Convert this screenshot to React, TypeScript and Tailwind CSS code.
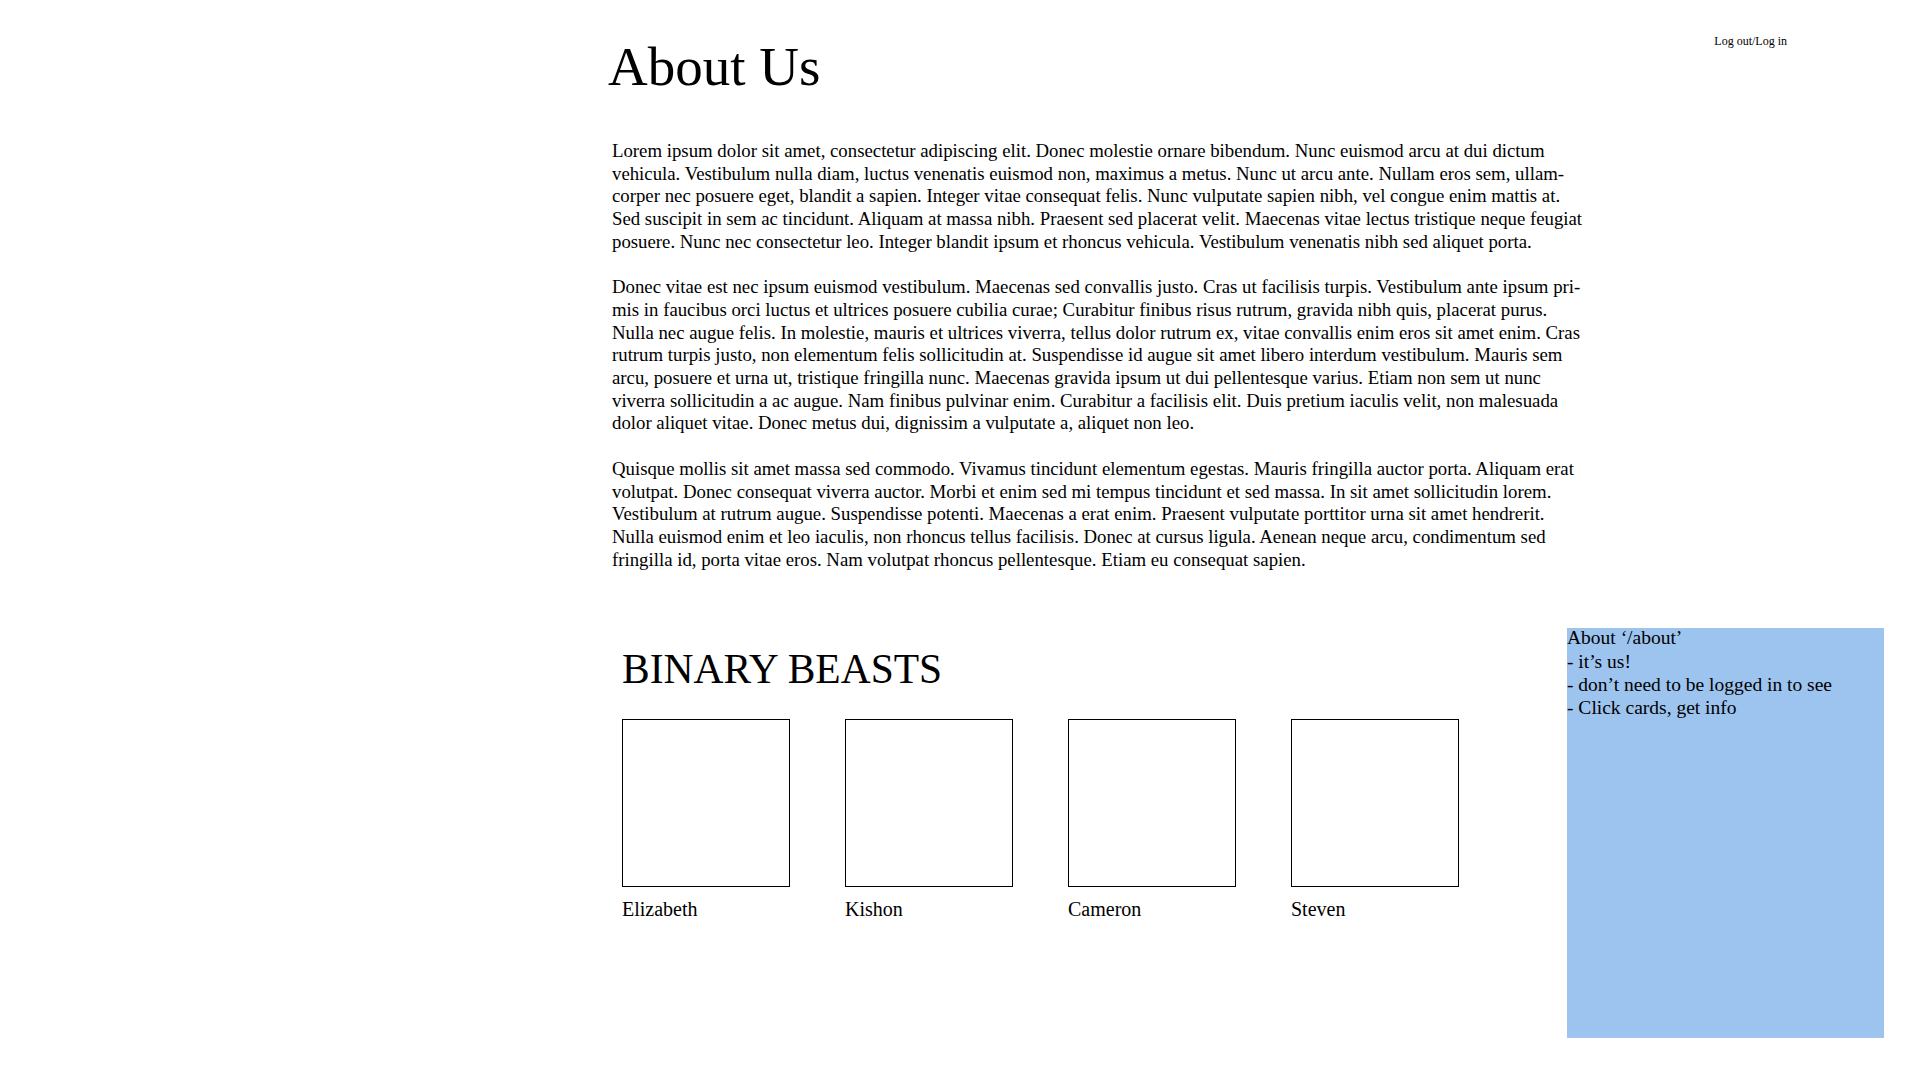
const paragraphs = [
  [
    "Lorem ipsum dolor sit amet, consectetur adipiscing elit. Donec molestie ornare bibendum. Nunc euismod arcu at dui dictum",
    "vehicula. Vestibulum nulla diam, luctus venenatis euismod non, maximus a metus. Nunc ut arcu ante. Nullam eros sem, ullam-",
    "corper nec posuere eget, blandit a sapien. Integer vitae consequat felis. Nunc vulputate sapien nibh, vel congue enim mattis at.",
    "Sed suscipit in sem ac tincidunt. Aliquam at massa nibh. Praesent sed placerat velit. Maecenas vitae lectus tristique neque feugiat",
    "posuere. Nunc nec consectetur leo. Integer blandit ipsum et rhoncus vehicula. Vestibulum venenatis nibh sed aliquet porta.",
  ],
  [
    "Donec vitae est nec ipsum euismod vestibulum. Maecenas sed convallis justo. Cras ut facilisis turpis. Vestibulum ante ipsum pri-",
    "mis in faucibus orci luctus et ultrices posuere cubilia curae; Curabitur finibus risus rutrum, gravida nibh quis, placerat purus.",
    "Nulla nec augue felis. In molestie, mauris et ultrices viverra, tellus dolor rutrum ex, vitae convallis enim eros sit amet enim. Cras",
    "rutrum turpis justo, non elementum felis sollicitudin at. Suspendisse id augue sit amet libero interdum vestibulum. Mauris sem",
    "arcu, posuere et urna ut, tristique fringilla nunc. Maecenas gravida ipsum ut dui pellentesque varius. Etiam non sem ut nunc",
    "viverra sollicitudin a ac augue. Nam finibus pulvinar enim. Curabitur a facilisis elit. Duis pretium iaculis velit, non malesuada",
    "dolor aliquet vitae. Donec metus dui, dignissim a vulputate a, aliquet non leo.",
  ],
  [
    "Quisque mollis sit amet massa sed commodo. Vivamus tincidunt elementum egestas. Mauris fringilla auctor porta. Aliquam erat",
    "volutpat. Donec consequat viverra auctor. Morbi et enim sed mi tempus tincidunt et sed massa. In sit amet sollicitudin lorem.",
    "Vestibulum at rutrum augue. Suspendisse potenti. Maecenas a erat enim. Praesent vulputate porttitor urna sit amet hendrerit.",
    "Nulla euismod enim et leo iaculis, non rhoncus tellus facilisis. Donec at cursus ligula. Aenean neque arcu, condimentum sed",
    "fringilla id, porta vitae eros. Nam volutpat rhoncus pellentesque. Etiam eu consequat sapien.",
  ],
];

const members = ["Elizabeth", "Kishon", "Cameron", "Steven"];

const notes = [
  "About \u2018/about\u2019",
  "- it\u2019s us!",
  "- don\u2019t need to be logged in to see",
  "- Click cards, get info",
];

export default function App() {
  return (
    <div className="min-h-screen w-full bg-white text-black font-['Liberation_Serif',serif]">
      {/* Header */}
      <header className="flex items-start justify-between pl-[608px] pr-[133px] pt-[35px]">
        <h1 className="mt-[4px] text-[55px] leading-none font-normal">About Us</h1>
        <a href="#" className="text-[12px] leading-none">
          Log out/Log in
        </a>
      </header>

      {/* Copy */}
      <main className="mt-[46px] pl-[612px] flex flex-col gap-[22.7px] text-[18.8px] leading-[22.7px]">
        {paragraphs.map((lines, i) => (
          <p key={i}>
            {lines.map((line) => (
              <span key={line} className="block whitespace-nowrap">
                {line}
              </span>
            ))}
          </p>
        ))}
      </main>

      {/* Team + note */}
      <div className="mt-[57px] flex items-start">
        <section className="ml-[622px] pt-[21px]">
          <h2 className="text-[41.5px] leading-none font-normal">BINARY BEASTS</h2>
          <div className="mt-[28.5px] flex gap-[55px]">
            {members.map((name) => (
              <div key={name} className="flex flex-col">
                <div className="w-[168px] h-[168px] border border-black bg-white" />
                <span className="mt-[10px] text-[20px] leading-[24px]">{name}</span>
              </div>
            ))}
          </div>
        </section>

        <aside className="ml-auto mr-[36px] w-[317px] h-[410px] bg-[#9dc3ef] text-[19.5px] leading-[23.3px]">
          <div className="-mt-[2px]">
            {notes.map((n) => (
              <div key={n} className="whitespace-nowrap">
                {n}
              </div>
            ))}
          </div>
        </aside>
      </div>
    </div>
  );
}
